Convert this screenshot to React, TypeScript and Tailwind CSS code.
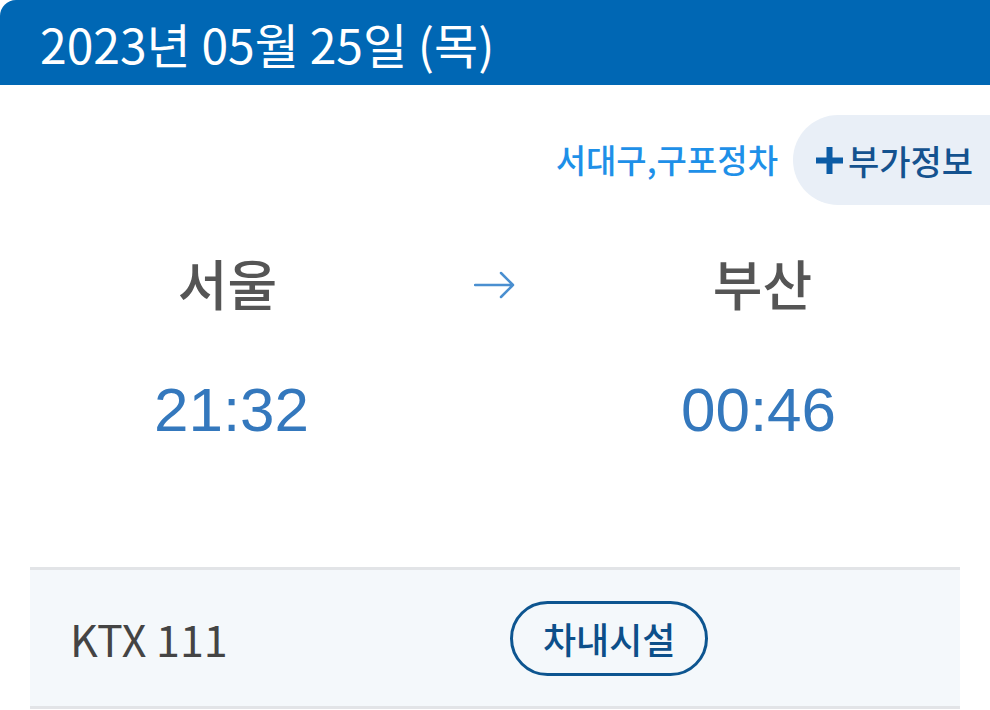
import React from "react";

const kr = { fontFamily: '"Noto Sans CJK KR", "Liberation Sans", sans-serif' };
const num = { fontFamily: '"Liberation Sans", "Noto Sans CJK KR", sans-serif' };

function ArrowIcon() {
  return (
    <svg width="42" height="30" viewBox="0 0 42 30" fill="none">
      <path d="M1 15h38M27 3l12 12-12 12" stroke="#4a8fd0" strokeWidth="2.5" strokeLinecap="round" strokeLinejoin="round" />
    </svg>
  );
}

function PlusIcon() {
  return (
    <svg width="29" height="29" viewBox="0 0 29 29">
      <path d="M14.5 1v27M1 14.5h27" stroke="#0b5ba5" strokeWidth="6" />
    </svg>
  );
}

export default function App() {
  return (
    <div className="w-[990px] h-[710px] overflow-hidden bg-white" style={kr}>
      <div className="h-[85px] bg-[#0067b4] rounded-tl-[16px] flex items-center pl-[40px]">
        <span className="text-white text-[48px] leading-none">2023년 05월 25일 (목)</span>
      </div>

      <div className="flex justify-end items-center mt-[30px] h-[90px]">
        <span className="text-[#1e90e8] text-[33px] font-medium mr-[15px]">서대구,구포정차</span>
        <div className="h-[90px] w-[197px] shrink-0 bg-[#e9eff7] rounded-l-full flex items-center pl-[22px] gap-[4px]">
          <PlusIcon />
          <span className="text-[#14528f] text-[34px] font-medium whitespace-nowrap">부가정보</span>
        </div>
      </div>

      <div className="grid grid-cols-[455px_80px_455px] mt-[48px]">
        <div className="flex flex-col items-center">
          <span className="text-[54px] font-medium text-[#555] leading-none h-[60px] flex items-center">서울</span>
          <span className="text-[62px] text-[#3478bd] leading-none mt-[66px] pl-[8px]" style={num}>21:32</span>
        </div>
        <div className="flex justify-center items-start pt-[17px]">
          <ArrowIcon />
        </div>
        <div className="flex flex-col items-center">
          <span className="text-[54px] font-medium text-[#555] leading-none h-[60px] flex items-center">부산</span>
          <span className="text-[62px] text-[#3478bd] leading-none mt-[66px] pr-[8px]" style={num}>00:46</span>
        </div>
      </div>

      <div className="mx-[30px] mt-[126px] h-[142px] border-y-[3px] border-[#e2e4e7] bg-[#f4f8fb] flex items-center">
        <div className="w-[480px] pl-[40px] text-[43px] text-[#444]">KTX 111</div>
        <div className="h-[75px] px-[30px] rounded-full border-[3px] border-[#0d5590] flex items-center text-[36px] font-medium text-[#0c4f8a]">
          차내시설
        </div>
      </div>
    </div>
  );
}
